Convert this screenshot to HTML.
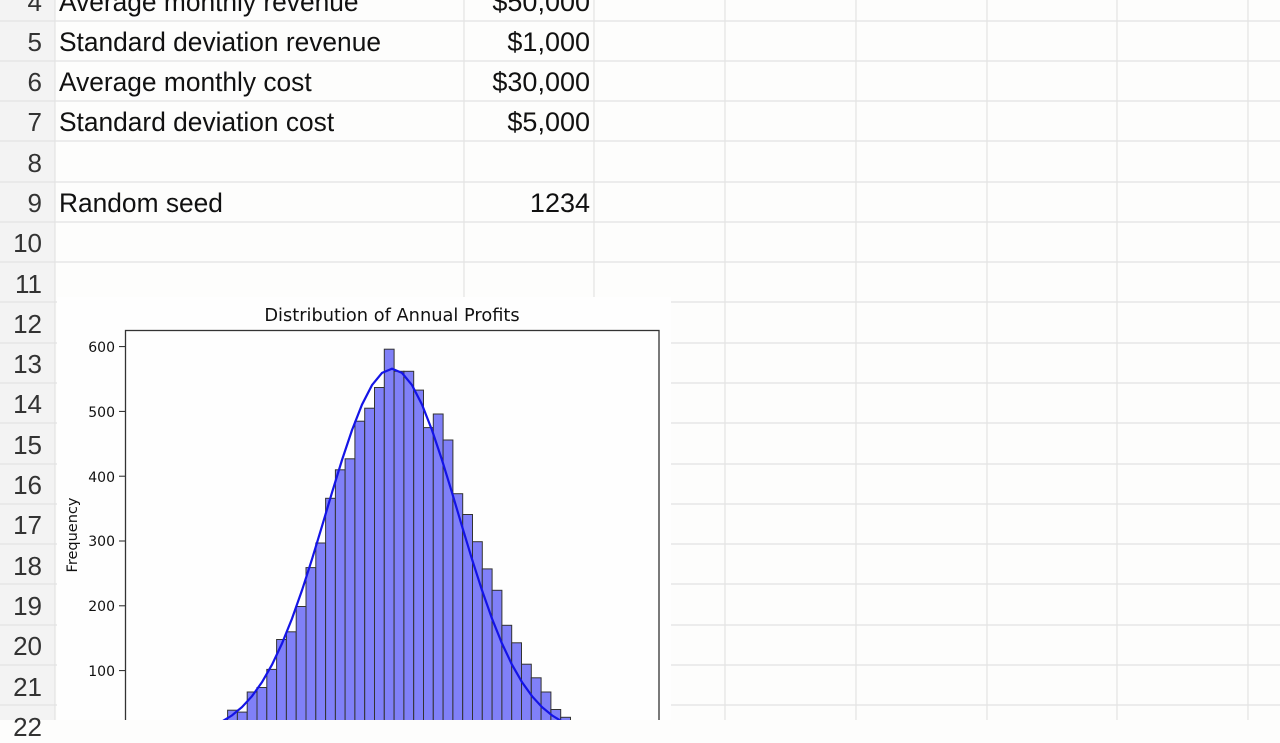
<!DOCTYPE html>
<html><head><meta charset="utf-8"><style>
html,body{margin:0;padding:0;width:1280px;height:720px;overflow:hidden;background:#fdfdfc;}
.c{position:absolute;font-family:"Liberation Sans",sans-serif;font-size:27px;color:#111;white-space:nowrap;transform-origin:left center;}
.v{position:absolute;font-family:"Liberation Sans",sans-serif;font-size:27px;color:#111;white-space:nowrap;}
.r{position:absolute;font-family:"Liberation Sans",sans-serif;font-size:26px;color:#333;width:42px;text-align:right;left:0;}
</style></head><body>
<svg width="1280" height="720" style="position:absolute;left:0;top:0" xmlns="http://www.w3.org/2000/svg">
<rect x="0" y="0" width="55" height="720" fill="#f3f3f3"/>
<g stroke="#e3e3e3" stroke-width="1.2">
<line x1="55" y1="0" x2="55" y2="720"/>
<line x1="464" y1="0" x2="464" y2="297"/>
<line x1="594" y1="0" x2="594" y2="297"/>
<line x1="725" y1="0" x2="725" y2="720"/>
<line x1="856" y1="0" x2="856" y2="720"/>
<line x1="987" y1="0" x2="987" y2="720"/>
<line x1="1117" y1="0" x2="1117" y2="720"/>
<line x1="1248" y1="0" x2="1248" y2="720"/>
<line x1="0" y1="21" x2="1280" y2="21"/>
<line x1="0" y1="61" x2="1280" y2="61"/>
<line x1="0" y1="101" x2="1280" y2="101"/>
<line x1="0" y1="141" x2="1280" y2="141"/>
<line x1="0" y1="182" x2="1280" y2="182"/>
<line x1="0" y1="222" x2="1280" y2="222"/>
<line x1="0" y1="262" x2="1280" y2="262"/>
<line x1="0" y1="302" x2="1280" y2="302"/>
<line x1="0" y1="343" x2="1280" y2="343"/>
<line x1="0" y1="383" x2="1280" y2="383"/>
<line x1="0" y1="423" x2="1280" y2="423"/>
<line x1="0" y1="464" x2="1280" y2="464"/>
<line x1="0" y1="504" x2="1280" y2="504"/>
<line x1="0" y1="544" x2="1280" y2="544"/>
<line x1="0" y1="584" x2="1280" y2="584"/>
<line x1="0" y1="625" x2="1280" y2="625"/>
<line x1="0" y1="665" x2="1280" y2="665"/>
<line x1="0" y1="705" x2="1280" y2="705"/>
</g>
<rect x="57" y="297" width="614" height="423" fill="#fefefe"/>
<text x="392" y="321" text-anchor="middle" font-family="DejaVu Sans,sans-serif" font-size="17.8" fill="#111">Distribution of Annual Profits</text>
<g font-family="DejaVu Sans,sans-serif" font-size="14" fill="#111" text-anchor="end">
<text x="115" y="352">600</text><text x="115" y="417">500</text><text x="115" y="482">400</text>
<text x="115" y="546">300</text><text x="115" y="611">200</text><text x="115" y="676">100</text>
</g>
<g stroke="#222" stroke-width="1">
<line x1="119" y1="346.6" x2="125" y2="346.6"/><line x1="119" y1="411.4" x2="125" y2="411.4"/>
<line x1="119" y1="476.2" x2="125" y2="476.2"/><line x1="119" y1="541" x2="125" y2="541"/>
<line x1="119" y1="605.8" x2="125" y2="605.8"/><line x1="119" y1="670.6" x2="125" y2="670.6"/>
</g>
<text transform="translate(77,535) rotate(-90)" text-anchor="middle" font-family="DejaVu Sans,sans-serif" font-size="14.5" fill="#111">Frequency</text>
<g id="bars" fill="#8080f8" stroke="#333" stroke-width="1"></g>
<path fill="none" stroke="#1414e6" stroke-width="2.2" d="M212,725.9 L222,721.5 L232,715.4 L242,707.1 L252,696.2 L262,682.2 L272,664.7 L282,643.5 L292,618.6 L302,590.3 L312,559.2 L322,526.2 L332,492.6 L342,460 L352,430.1 L362,404.6 L372,385.1 L382,372.9 L392,368.7 L402,372.9 L412,385.1 L422,404.6 L432,430.1 L442,460 L452,492.6 L462,526.2 L472,559.2 L482,590.3 L492,618.6 L502,643.5 L512,664.7 L522,682.2 L532,696.2 L542,707.1 L552,715.4 L562,721.5 L572,725.9"/>
<rect x="125.5" y="330.5" width="533.5" height="400" fill="none" stroke="#333" stroke-width="1.3"/>
</svg>
<script>
var v=[20,38,35,66,73,101,147,159,198,258,296,365,409,426,484,504,536,595,561,561,532,474,495,455,372,340,298,256,223,169,142,109,88,66,39,27,12];
var g=document.getElementById('bars'),s='';
for(var i=0;i<v.length;i++){var x=217.8+9.796*i,y=734.8-v[i]*0.648;s+='<rect x="'+x.toFixed(1)+'" y="'+y.toFixed(1)+'" width="9.8" height="'+(740-y).toFixed(1)+'"/>';}
g.innerHTML=s;
</script>
<div class="r" style="top:-13px">4</div>
<div class="r" style="top:27px">5</div>
<div class="r" style="top:67px">6</div>
<div class="r" style="top:107px">7</div>
<div class="r" style="top:148px">8</div>
<div class="r" style="top:188px">9</div>
<div class="r" style="top:228px">10</div>
<div class="r" style="top:269px">11</div>
<div class="r" style="top:309px">12</div>
<div class="r" style="top:349px">13</div>
<div class="r" style="top:389px">14</div>
<div class="r" style="top:430px">15</div>
<div class="r" style="top:470px">16</div>
<div class="r" style="top:510px">17</div>
<div class="r" style="top:551px">18</div>
<div class="r" style="top:591px">19</div>
<div class="r" style="top:631px">20</div>
<div class="r" style="top:672px">21</div>
<div class="r" style="top:712px">22</div>
<div class="c" style="left:59px;top:-13px;transform:scaleX(0.975)">Average monthly revenue</div>
<div class="c" style="left:59px;top:27px;transform:scaleX(0.975)">Standard deviation revenue</div>
<div class="c" style="left:59px;top:67px;transform:scaleX(0.975)">Average monthly cost</div>
<div class="c" style="left:59px;top:107px;transform:scaleX(0.975)">Standard deviation cost</div>
<div class="c" style="left:59px;top:188px;transform:scaleX(0.975)">Random seed</div>
<div class="v" style="right:690px;top:-13px">$50,000</div>
<div class="v" style="right:690px;top:27px">$1,000</div>
<div class="v" style="right:690px;top:67px">$30,000</div>
<div class="v" style="right:690px;top:107px">$5,000</div>
<div class="v" style="right:690px;top:188px">1234</div>
</body></html>
